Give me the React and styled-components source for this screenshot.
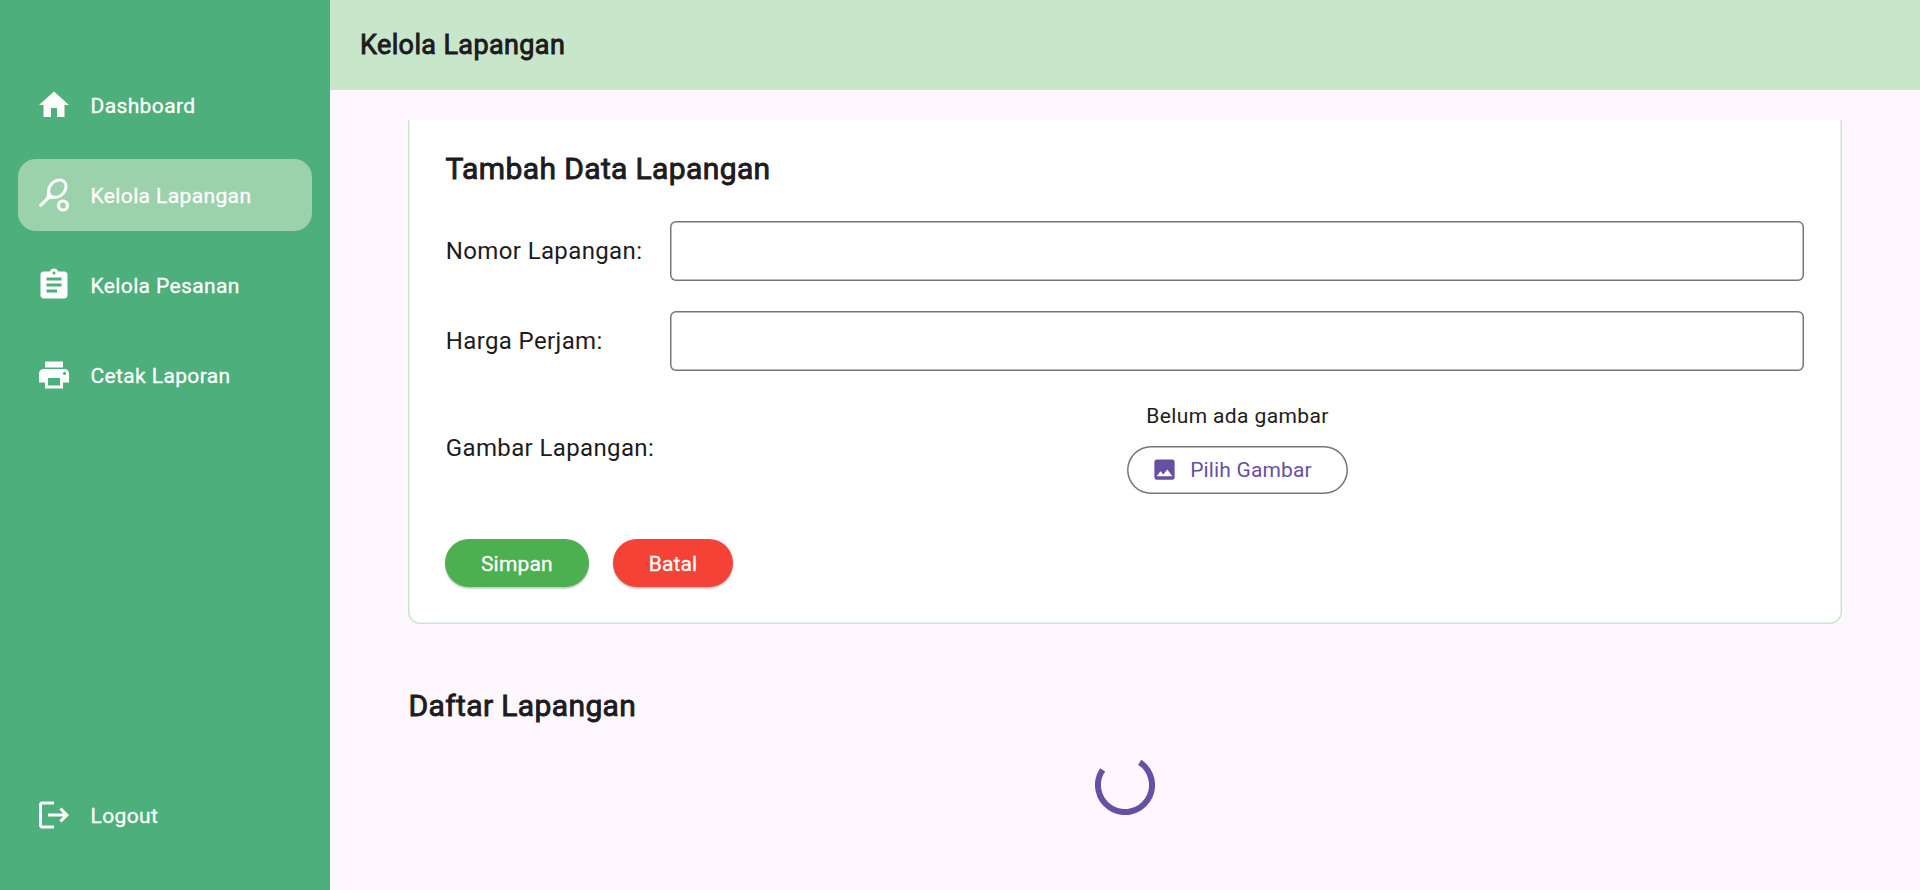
import React from 'react';
import styled, { createGlobalStyle, css } from 'styled-components';
import { MdHome, MdSportsTennis, MdAssignment, MdPrint, MdLogout, MdImage } from 'react-icons/md';

const GlobalStyle = createGlobalStyle`
  *, *::before, *::after { box-sizing: border-box; }
  body {
    margin: 0;
    background: #fef7ff;
    color: #1d1b20;
    font-family: Roboto, 'Noto Sans', sans-serif;
    font-size: 21px;
    letter-spacing: 0.375px;
  }
  button, input { font: inherit; letter-spacing: inherit; }
`;

const heading = css`
  margin: 0;
  font-weight: 400;
  -webkit-text-stroke: 0.9px currentColor;
`;

const Shell = styled.div`
  display: flex;
  width: 100%;
  height: 100vh;
  overflow: hidden;
`;

const Sidebar = styled.nav`
  display: flex;
  flex-direction: column;
  gap: 18px;
  flex: 0 0 330px;
  padding: 69px 18px 39px;
  background: #4daf7c;
`;

const NavItem = styled.a`
  display: flex;
  align-items: center;
  gap: 18px;
  height: 72px;
  padding: 0 18px;
  border-radius: 18px;
  color: #fff;
  background: ${(p) => (p.$active ? '#9cd2ab' : 'transparent')};
  margin-top: ${(p) => (p.$last ? 'auto' : '0')};
  white-space: nowrap;

  svg { width: 36px; height: 36px; flex: none; }
`;

const NavLabel = styled.span`
  padding: 2px 0 0 0.5px;
  -webkit-text-stroke: 0.3px currentColor;
`;

const Main = styled.main`
  display: flex;
  flex-direction: column;
  flex: 1;
  min-width: 0;
`;

const Header = styled.header`
  display: flex;
  align-items: center;
  flex: 0 0 90px;
  padding: 0 30px;
  background: #c8e6c9;
`;

const PageTitle = styled.h1`
  ${heading}
  font-size: 27px;
`;

const ScrollArea = styled.div`
  flex: 1;
  min-height: 0;
  margin: 30px 78px 0;
  overflow: hidden;
`;

const Card = styled.section`
  height: 564px;
  margin-top: -60px;
  padding: 91px 38px 37px 37px;
  border-radius: 12px;
  background: #fff;
  box-shadow: inset 0 0 0 1.5px #c8e6c9;
`;

const SectionTitle = styled.h2`
  ${heading}
  padding-left: 0.5px;
  font-size: 30px;
  line-height: 36px;
`;

const FieldRow = styled.div`
  display: grid;
  grid-template-columns: 225px 1fr;
  align-items: center;
  margin-top: ${(p) => p.$gap}px;
`;

const Label = styled.label`
  padding-left: 0.75px;
  font-size: 24px;
  white-space: nowrap;
`;

const TextInput = styled.input`
  width: 100%;
  height: 60px;
  padding: 0 18px;
  border: 0;
  outline: 0;
  border-radius: 6px;
  background: transparent;
  box-shadow: inset 0 0 0 1.5px #79747e;
`;

const Picker = styled.div`
  display: flex;
  flex-direction: column;
  align-items: center;
  gap: 15px;
  padding-left: 1px;
`;

const Hint = styled.span`
  line-height: 30px;
`;

const OutlinedButton = styled.button`
  display: flex;
  align-items: center;
  gap: 12px;
  height: 48px;
  padding: 0 36px 0 24px;
  border: 0;
  border-radius: 24px;
  background: transparent;
  color: #6750a4;
  letter-spacing: 0.15px;
  box-shadow: inset 0 0 0 1.5px #79747e;

  svg { width: 27px; height: 27px; margin-bottom: 1px; }
`;

const Actions = styled.div`
  display: flex;
  gap: 24px;
  margin-top: 45px;
`;

const FilledButton = styled.button`
  height: 48px;
  padding: 2px 36px 0;
  border: 0;
  border-radius: 24px;
  color: #fff;
  letter-spacing: 0.15px;
  -webkit-text-stroke: 0.3px currentColor;
  background: ${(p) => p.$color};
  box-shadow: 0 1.5px 2px rgba(0, 0, 0, 0.26);
`;

const ListTitle = styled.h2`
  ${heading}
  margin-top: 64px;
  padding-left: 0.5px;
  font-size: 30px;
  line-height: 36px;
`;

const Loading = styled.div`
  display: flex;
  justify-content: center;
  margin-top: 31px;
`;

const navItems = [
  { label: 'Dashboard', Icon: MdHome },
  { label: 'Kelola Lapangan', Icon: MdSportsTennis, active: true },
  { label: 'Kelola Pesanan', Icon: MdAssignment },
  { label: 'Cetak Laporan', Icon: MdPrint },
];

function Spinner() {
  const r = 27;
  const point = (deg) => {
    const a = (deg * Math.PI) / 180;
    return `${30 + r * Math.sin(a)} ${30 - r * Math.cos(a)}`;
  };
  return (
    <svg width="60" height="60" viewBox="0 0 60 60" fill="none">
      <path d={`M${point(33)} A${r} ${r} 0 1 1 ${point(304)}`} stroke="#6750a4" strokeWidth="6" />
    </svg>
  );
}

export default function App() {
  return (
    <>
      <GlobalStyle />
      <Shell>
        <Sidebar>
          {navItems.map(({ label, Icon, active }) => (
            <NavItem key={label} $active={active}>
              <Icon />
              <NavLabel>{label}</NavLabel>
            </NavItem>
          ))}
          <NavItem $last>
            <MdLogout />
            <NavLabel>Logout</NavLabel>
          </NavItem>
        </Sidebar>
        <Main>
          <Header>
            <PageTitle>Kelola Lapangan</PageTitle>
          </Header>
          <ScrollArea>
            <Card>
              <SectionTitle>Tambah Data Lapangan</SectionTitle>
              <FieldRow $gap={34}>
                <Label htmlFor="nomor">Nomor Lapangan:</Label>
                <TextInput id="nomor" />
              </FieldRow>
              <FieldRow $gap={30}>
                <Label htmlFor="harga">Harga Perjam:</Label>
                <TextInput id="harga" />
              </FieldRow>
              <FieldRow $gap={30}>
                <Label as="span">Gambar Lapangan:</Label>
                <Picker>
                  <Hint>Belum ada gambar</Hint>
                  <OutlinedButton type="button">
                    <MdImage />
                    Pilih Gambar
                  </OutlinedButton>
                </Picker>
              </FieldRow>
              <Actions>
                <FilledButton type="button" $color="#4caf50">Simpan</FilledButton>
                <FilledButton type="button" $color="#f44336">Batal</FilledButton>
              </Actions>
            </Card>
            <ListTitle>Daftar Lapangan</ListTitle>
            <Loading>
              <Spinner />
            </Loading>
          </ScrollArea>
        </Main>
      </Shell>
    </>
  );
}
